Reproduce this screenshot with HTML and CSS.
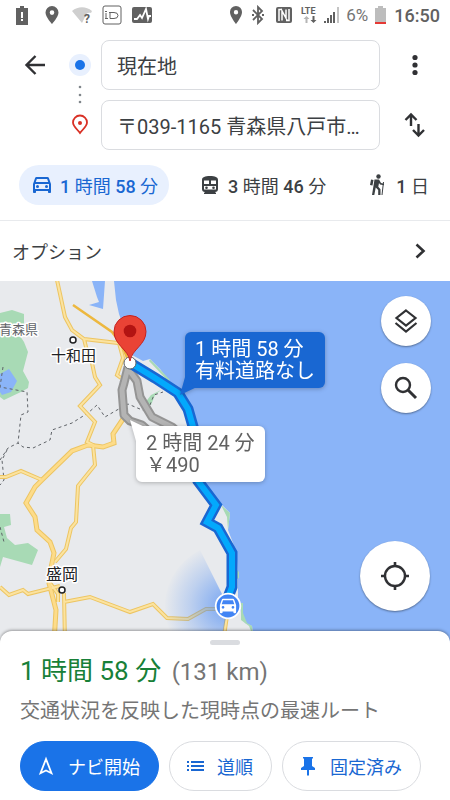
FILE: index.html
```html
<!DOCTYPE html>
<html lang="ja">
<head>
    <meta charset="UTF-8">
    <meta name="viewport" content="width=device-width, initial-scale=1.0">
    <title>ルート検索</title>
    <link rel="stylesheet" href="styles.css">
</head>
<body>

    <!-- Status bar -->
    <div class="status-bar">
        <div class="status-group">
            <svg width="20" height="20" viewBox="0 0 20 20"><path fill="#616161" d="M4 3h4V1h4v2h4v17H4z"/><path fill="#fff" d="M9 7h2v6H9zM9 14h2v2H9z"/></svg>
            <svg width="20" height="20" viewBox="0 0 20 20"><path fill="#616161" fill-rule="evenodd" d="M10 1a6.500 6.500 0 0 0-6.500 6.500C3.500 12 10 19 10 19s6.500-7 6.500-11.500A6.500 6.500 0 0 0 10 1zm0 4.300a2.300 2.300 0 1 1 0 4.600 2.300 2.300 0 0 1 0-4.600z"/></svg>
            <svg width="20" height="20" viewBox="0 0 20 20"><path fill="#cfcfcf" d="M0 6c6-5 14-5 20 0l-1 2c-3-1-6 1-6 4l-3 6z"/><text class="wifi-mark" x="12" y="18">?</text></svg>
            <svg width="20" height="20" viewBox="0 0 20 20"><rect x="1" y="1" width="18" height="18" rx="2" fill="#fff" stroke="#616161"/><path fill="none" stroke="#616161" d="M4 8v6M3 13.500h3M8 7.500v6M7 7.500h5q4 0 4 3t-4 3H8"/><path fill="#616161" d="M3 6h2v1H3z"/></svg>
            <svg width="20" height="20" viewBox="0 0 20 20"><rect y="2" width="20" height="16" rx="2" fill="#616161"/><path fill="none" stroke="#fff" stroke-width="1.800" d="M2 14h3l3-4 2 3 4-9 2 10 1-3h2"/></svg>
        </div>
        <div class="status-group status-right">
            <svg width="16" height="20" viewBox="0 0 16 20"><path fill="#616161" fill-rule="evenodd" d="M6 1a6 6 0 0 0-6 6.200C0 11.500 6 19 6 19s6-7.500 6-11.800A6 6 0 0 0 6 1zm0 4a2.200 2.200 0 1 1 0 4.400A2.200 2.200 0 0 1 6 5z"/></svg>
            <svg width="16" height="20" viewBox="0 0 16 20"><path fill="none" stroke="#616161" stroke-width="1.800" d="M1 5l9 9-4 4V2l4 4-9 9"/><path fill="#616161" d="M0 9h2v2H0zM10 9h2v2h-2z"/></svg>
            <svg width="20" height="20" viewBox="0 0 20 20"><path fill="#616161" d="M2 4q0-2 2-2h12q2 0 2 2v12q0 2-2 2H4q-2 0-2-2z"/><path fill="none" stroke="#fff" stroke-width="1.500" d="M8 4.500H5V16M8 15.500V6l5 9M12 4.500V14M12 15.500h3V4"/></svg>
            <svg width="18" height="20" viewBox="0 0 18 20"><text class="lte-mark" x="1" y="9">LTE</text><path fill="#b5b5b5" d="M6.500 11l3 3h-2v4h-2v-4h-2z"/><path fill="#616161" d="M13.500 18l3-3h-2v-4h-2v4h-2z"/></svg>
            <svg width="16" height="20" viewBox="0 0 16 20"><path fill="#616161" d="M0 16h2v2H0zM3 13h2v5H3zM6 10h2v8H6zM9 7h2v11H9z"/><path fill="#c4c4c4" d="M13 2h2v16h-2z"/></svg>
            <span class="percent">6%</span>
            <svg width="14" height="20" viewBox="0 0 14 20"><path fill="#bdbdbd" d="M1 3h3V1h5v2h3v14H1z"/><path fill="#e53935" d="M1 17h11v2H1z"/></svg>
            <span class="clock">16:50</span>
        </div>
    </div>

    <!-- Start and destination -->
    <form class="search">
        <button class="icon-button" type="button" aria-label="戻る">
            <svg width="24" height="24" viewBox="0 0 24 24"><path fill="none" stroke="#303134" stroke-width="2.400" d="M22 12H4M12.500 3L3.500 12l9 9"/></svg>
        </button>
        <svg class="waypoints" width="42" height="110" viewBox="0 0 42 110">
            <circle cx="21" cy="25" r="11" fill="#e8f0fe"/>
            <circle cx="21" cy="25" r="5" fill="#1a73e8"/>
            <circle cx="21" cy="47" r="1.300" fill="#80868b"/>
            <circle cx="21" cy="55" r="1.300" fill="#80868b"/>
            <circle cx="21" cy="62" r="1.300" fill="#80868b"/>
            <path fill="none" stroke="#d93025" stroke-width="1.800" d="M21 93c-2-3-7-6.500-7-10.500a7 7 0 0 1 14 0C28 86.500 23 90 21 93z"/>
            <circle cx="21" cy="83" r="2" fill="#d93025"/>
        </svg>
        <input class="place" type="text" aria-label="出発地" value="現在地">
        <button class="icon-button" type="button" aria-label="メニュー">
            <svg width="24" height="24" viewBox="0 0 24 24"><g fill="#303134"><circle cx="12" cy="4.500" r="2.600"/><circle cx="12" cy="12" r="2.600"/><circle cx="12" cy="19.500" r="2.600"/></g></svg>
        </button>
        <input class="place destination" type="text" aria-label="目的地" value="〒039-1165 青森県八戸市…">
        <button class="icon-button" type="button" aria-label="入れ替え">
            <svg width="24" height="26" viewBox="0 0 24 26"><path fill="none" stroke="#303134" stroke-width="2.400" d="M8 14V2.500M2.500 8L8 2.500 13.500 8M15.500 12v11.500M10 18l5.500 5.500L21 18"/></svg>
        </button>
    </form>

    <!-- Travel modes -->
    <nav class="modes">
        <button class="mode active">
            <svg width="20" height="20" viewBox="2 3 20 20"><path fill="currentColor" d="M18.920 6.010C18.720 5.420 18.160 5 17.500 5h-11c-.66 0-1.210.42-1.420 1.010L3 12v8c0 .55.45 1 1 1h1c.55 0 1-.45 1-1v-1h12v1c0 .55.45 1 1 1h1c.55 0 1-.45 1-1v-8l-2.080-5.990zM6.850 7h10.290l1.080 3.110H5.770L6.850 7zM19 17H5v-5h14v5z"/><circle cx="7.500" cy="14.500" r="1.500" fill="currentColor"/><circle cx="16.500" cy="14.500" r="1.500" fill="currentColor"/></svg>
            <span><b>1</b> 時間 <b>58</b> 分</span>
        </button>
        <button class="mode">
            <svg width="20" height="20" viewBox="0 0 20 20"><path fill="currentColor" fill-rule="evenodd" d="M2 5c0-3 3-4 8-4s8 1 8 4v9q0 3-3 3l1 1v1H4v-1l1-1q-3 0-3-3zm2 .500V9h5V5.500zm7 0V9h5V5.500zM4 11v3.500h12V11z"/><circle cx="6.500" cy="12.800" r="1.300" fill="currentColor"/><circle cx="13.500" cy="12.800" r="1.300" fill="currentColor"/></svg>
            <span><b>3</b> 時間 <b>46</b> 分</span>
        </button>
        <button class="mode">
            <svg width="20" height="22" viewBox="0 0 20 22"><circle cx="10.500" cy="2.500" r="2.200" fill="currentColor"/><path fill="currentColor" d="M6.500 5.500h4.500l2 3.500 3 .700V11.300l-4-.800-1-1.500-.700 3.700 2.200 2.500V21h-2.300v-5l-2.500-2.500L6.300 21H4z"/><path fill="currentColor" d="M3 5.500l2.500.500-1 5.500-2.500-.500z"/><path fill="none" stroke="currentColor" d="M15.500 8l-1.500 13"/></svg>
            <span><b>1</b> 日</span>
        </button>
    </nav>

    <button class="options">
        <span>オプション</span>
        <svg width="20" height="20" viewBox="0 0 20 20"><path fill="none" stroke="#303134" stroke-width="2.600" d="M6.500 3.500L13.500 10l-7 6.500"/></svg>
    </button>

    <!-- Map -->
    <main class="map">
        <svg class="map-canvas" viewBox="0 281 450 362" preserveAspectRatio="xMinYMin slice">
            <defs>
                <radialGradient id="beam" gradientUnits="userSpaceOnUse" cx="228" cy="606" r="64">
                    <stop offset="0" stop-color="#4285f4" stop-opacity=".7"/>
                    <stop offset=".6" stop-color="#4285f4" stop-opacity=".25"/>
                    <stop offset="1" stop-color="#4285f4" stop-opacity="0"/>
                </radialGradient>
            </defs>
            <rect y="281" width="450" height="362" fill="#8ab4f8"/>
            <path fill="#e8eaed" d="M0 281H92L97 297 99 302 89 305 103 309 105 281H114L116 300 119 314 124 328 132 355 143 361 150 359 160 369 178 393 188 408 193 427 200 482 218 505 222 505 230 513 228 530 233 543 237 560 238 577 238 603 245 623 252 626 254 643H0z"/>

            <!-- Parks and lake -->
            <g fill="#a8dab5">
                <path d="M0 313L12 310 24 314 24 326 20 336 24 342 28 352 23 371 29 382 28 388 23 391 4 400 0 397z"/>
                <path d="M0 514H10L11 525 4 527 7 538 15 545 28 543 38 550 32 565 3 557 0 567z"/>
                <path d="M144 404L151 395 161 390 155 395 151 405z"/>
                <path d="M150 359L170 380 168 381 149 361z"/>
                <path d="M221 505L230 513 228 530 227 517zM237 570l2 2v6l-2 1zM241 603h2v10l4 10 5 3 1 10-4-10-8-6z"/>
            </g>
            <path fill="#8ab4f8" d="M0 374L9 369 17 381 11 392 2 395 0 392z"/>

            <g class="border-line">
                <path d="M0 460L8 448 18 443 23 447 33 448 50 440 52 430 72 423 88 413 97 405 105 417 117 410 128 404 147 412 154 395 163 392"/>
                <path d="M3 367L0 387 27 392 28 412 21 415 18 443M7 450L2 460 4 480 0 485M0 527L4 542"/>
            </g>

            <!-- Roads: darker casing below, light centre above -->
            <g class="road-case">
                <path d="M57 280L65 317 72 330 84 339 118 343M84 339L86 347 92 363 95 377 100 385 80 406 95 422 87 442 93 445 95 465 78 486 76 522 71 528 66 549 55 562"/>
                <path d="M0 477H6L21 471 42 480M0 587L9 595 23 590 28 594 60 586M64 602L90 597 130 612 153 604 167 618 188 619 206 609H228L223 643M64 593L65 643M50 583L58 594V602M119 343L123 358 117 375 121 378"/>
            </g>
            <g class="road-case wide">
                <path d="M123 419L113 434 114 443 103 447 88 445 72 451 42 480 35 487 26 503 35 517 37 530 50 542 54 553 50 573 49 583 56 610 54 643"/>
            </g>
            <g class="road-fill">
                <path d="M57 280L65 317 72 330 84 339 118 343M84 339L86 347 92 363 95 377 100 385 80 406 95 422 87 442 93 445 95 465 78 486 76 522 71 528 66 549 55 562"/>
                <path d="M0 477H6L21 471 42 480M0 587L9 595 23 590 28 594 60 586M64 602L90 597 130 612 153 604 167 618 188 619 206 609H228L223 643M64 593L65 643M50 583L58 594V602M119 343L123 358 117 375 121 378"/>
            </g>
            <g class="road-fill wide">
                <path d="M123 419L113 434 114 443 103 447 88 445 72 451 42 480 35 487 26 503 35 517 37 530 50 542 54 553 50 573 49 583 56 610 54 643"/>
            </g>
            <path fill="none" stroke="#edb83f" stroke-width="2.500" d="M73 305L112 332 122 345 128 360"/>

            <path fill="url(#beam)" d="M228 606L200 550A64 64 0 0 0 216 670z"/>

            <!-- Alternative routes -->
            <g class="alt-case">
                <path d="M128 367L124 383 122 390 124 415 130 421 142 425 152 434M129 370L137 381 140 397 152 417 172 427 180 434"/>
            </g>
            <g class="alt-fill">
                <path d="M128 367L124 383 122 390 124 415 130 421 142 425 152 434M129 370L137 381 140 397 152 417 172 427 180 434"/>
            </g>

            <!-- Selected route -->
            <path class="route-case" d="M132 364L155 378 178 393 188 409 194 430 198 481 216 505 207 522 218 528 232 553 232 587 227 600"/>
            <path class="route-fill" d="M132 364L155 378 178 393 188 409 194 430 198 481 216 505 207 522 218 528 232 553 232 587 227 600"/>

            <circle cx="130" cy="363" r="6" fill="#fff" stroke="#5f6368"/>
            <path fill="#ea4335" stroke="#c5221f" d="M130 361C128 349 114 345 114 331.500a16 16 0 0 1 32 0C146 345 132 349 130 361z"/>
            <circle cx="130" cy="331" r="6.300" fill="#b31412"/>

            <!-- Current position -->
            <circle cx="228" cy="606" r="12.300" fill="#4285f4" stroke="#fff" stroke-width="1.800"/>
            <svg x="219" y="597" width="18" height="18" viewBox="2 3 20 20"><path fill="#fff" d="M18.920 6.010C18.720 5.420 18.160 5 17.500 5h-11c-.66 0-1.210.42-1.420 1.010L3 12v8c0 .55.45 1 1 1h1c.55 0 1-.45 1-1v-1h12v1c0 .55.45 1 1 1h1c.55 0 1-.45 1-1v-8l-2.080-5.990zM6.500 16c-.83 0-1.500-.67-1.500-1.500S5.670 13 6.500 13s1.500.67 1.500 1.500S7.330 16 6.500 16zm11 0c-.83 0-1.500-.67-1.500-1.500s.67-1.500 1.500-1.500 1.500.67 1.500 1.500-.67 1.500-1.500 1.500zM5 11l1.500-4.500h11L19 11H5z"/></svg>

            <!-- Places -->
            <circle class="town" cx="73" cy="340" r="3"/>
            <circle class="town" cx="62" cy="590" r="3"/>
            <text class="place-name region" x="-1" y="334">青森県</text>
            <text class="place-name" x="51" y="361">十和田</text>
            <text class="place-name city" x="46" y="580">盛岡</text>
        </svg>

        <div class="callout main-route">
            <div>1 時間 58 分</div>
            <div>有料道路なし</div>
        </div>
        <div class="callout other-route">
            <div>2 時間 24 分</div>
            <div>￥490</div>
        </div>

        <div class="map-tools">
            <button class="round-button" aria-label="レイヤ">
                <svg width="26" height="26" viewBox="0 0 26 26"><path fill="none" stroke="#303134" stroke-width="2.200" d="M13 2.500L22.500 10 13 17.500 3.500 10zM2.500 15L13 23.500 23.500 15"/></svg>
            </button>
            <button class="round-button" aria-label="検索">
                <svg width="26" height="26" viewBox="0 0 26 26"><circle cx="10" cy="10" r="7" fill="none" stroke="#303134" stroke-width="2.400"/><path stroke="#303134" stroke-width="3" d="M15 15l8 8"/></svg>
            </button>
        </div>
        <button class="round-button locate" aria-label="現在地を表示">
            <svg width="30" height="30" viewBox="0 0 30 30"><circle cx="15" cy="15" r="10" fill="none" stroke="#303134" stroke-width="2.400"/><path stroke="#303134" stroke-width="2.600" d="M15 1v4.500M15 24.500V29M1 15h4.500M24.500 15H29"/></svg>
        </button>
    </main>

    <!-- Route summary -->
    <section class="sheet">
        <div class="handle"></div>
        <h1 class="duration">1 時間 58 分 <span class="distance">(131 km)</span></h1>
        <p class="note">交通状況を反映した現時点の最速ルート</p>
        <div class="actions">
            <button class="action primary">
                <svg width="20" height="20" viewBox="0 0 20 20"><path fill="none" stroke="currentColor" stroke-width="1.800" d="M10 3L4.500 17.200 10 14.500l5.500 2.700z"/></svg>
                ナビ開始
            </button>
            <button class="action">
                <svg width="20" height="20" viewBox="0 0 20 20"><path fill="currentColor" d="M2 5h2v2H2zM2 9h2v2H2zM2 13h2v2H2zM6 5h13v2H6zM6 9h13v2H6zM6 13h13v2H6z"/></svg>
                道順
            </button>
            <button class="action">
                <svg width="20" height="20" viewBox="0 0 20 20"><path fill="#1a73e8" d="M5 1h10v1l-1 1v7l3 2v2h-6v5l-1 1-1-1v-5H3v-2l3-2V3L5 2z"/></svg>
                固定済み
            </button>
        </div>
    </section>

</body>
</html>
```

FILE: styles.css
```css
* {
    box-sizing: border-box;
}

body {
    display: flex;
    flex-direction: column;
    min-height: 100vh;
    margin: 0;
    background-color: #fff;
    color: #3c4043;
    font-family: Roboto, "Noto Sans CJK JP", sans-serif;
}

button {
    padding: 0;
    border: none;
    background: none;
    color: inherit;
    font-family: inherit;
    cursor: pointer;
}

svg {
    flex: none;
}

/* Status bar */
.status-bar {
    display: flex;
    justify-content: space-between;
    align-items: center;
    height: 30px;
    padding: 0 10px 0 12px;
    color: #616161;
}

.status-group {
    display: flex;
    align-items: center;
    gap: 10px;
}

.status-right {
    gap: 6px;
}

.percent {
    font-size: 17px;
    color: #757575;
}

.clock {
    font-size: 18px;
    font-weight: 500;
}

.wifi-mark {
    font-size: 12px;
    font-weight: 700;
    fill: #616161;
}

.lte-mark {
    font-size: 9px;
    font-weight: 700;
    fill: #616161;
}

/* Start and destination */
.search {
    display: grid;
    grid-template-columns: 48px 42px 1fr 70px;
    grid-template-rows: 50px 50px;
    row-gap: 10px;
    padding: 10px 0 0 11px;
}

.icon-button {
    display: flex;
    justify-content: center;
    align-items: center;
}

.waypoints {
    grid-column: 2;
    grid-row: 1 / 3;
}

.place {
    min-width: 0;
    padding: 0 15px;
    border: 1px solid #dadce0;
    border-radius: 8px;
    background-color: #fff;
    color: #3c4043;
    font-family: inherit;
    font-size: 20px;
    text-overflow: ellipsis;
}

.destination {
    grid-column: 3;
}

/* Travel modes */
.modes {
    display: flex;
    gap: 18px;
    padding: 15px 0 15px 19px;
    border-bottom: 1px solid #e8eaed;
    overflow: hidden;
}

.mode {
    display: flex;
    align-items: center;
    gap: 8px;
    height: 40px;
    padding: 0 11px 0 13px;
    border-radius: 20px;
    font-size: 18px;
    white-space: nowrap;
}

.mode b {
    font-weight: 500;
}

.mode.active {
    background-color: #e8f0fe;
    color: #1967d2;
}

.options {
    display: flex;
    justify-content: space-between;
    align-items: center;
    height: 60px;
    padding: 0 20px 0 12px;
    font-size: 18px;
}

/* Map */
.map {
    position: relative;
    z-index: 0;
    flex: 1;
    min-height: 362px;
    overflow: hidden;
    box-shadow: inset 0 2px 2px rgba(0,0,0,0.25);
}

.map-canvas {
    position: absolute;
    top: 0;
    left: 0;
    z-index: -1;
    width: 100%;
    height: 100%;
}

.border-line {
    fill: none;
    stroke: #5f6368;
    stroke-dasharray: 3 3;
}

.road-case {
    fill: none;
    stroke: #edc562;
    stroke-width: 4;
}

.road-case.wide {
    stroke-width: 5;
}

.road-fill {
    fill: none;
    stroke: #fbe3a0;
    stroke-width: 2;
}

.road-fill.wide {
    stroke: #fddc8a;
    stroke-width: 3;
}

.alt-case {
    fill: none;
    stroke: #949494;
    stroke-width: 9;
    stroke-linejoin: round;
}

.alt-fill {
    fill: none;
    stroke: #b4b4b4;
    stroke-width: 5;
    stroke-linejoin: round;
}

.route-case {
    fill: none;
    stroke: #1967d2;
    stroke-width: 11;
}

.route-fill {
    fill: none;
    stroke: #03a9fc;
    stroke-width: 6;
}

.town {
    fill: #fff;
    stroke: #202124;
    stroke-width: 1.5;
}

.place-name {
    font-size: 15px;
    fill: #202124;
    stroke: #fff;
    stroke-width: 3;
    stroke-linejoin: round;
    paint-order: stroke;
}

.place-name.region {
    font-size: 13px;
    fill: #5f6368;
}

.place-name.city {
    font-size: 16px;
}

.callout {
    position: absolute;
    padding: 6px 10px;
    border-radius: 6px;
    font-size: 20px;
    line-height: 22px;
    white-space: nowrap;
    filter: drop-shadow(0 1px 2px rgba(0,0,0,0.25));
}

.callout::before {
    content: "";
    position: absolute;
    width: 18px;
    height: 24px;
    background-color: inherit;
}

.main-route {
    top: 51px;
    left: 185px;
    background-color: #1967d2;
    color: #fff;
}

.main-route::before {
    bottom: -7px;
    left: -5px;
    clip-path: polygon(30% 20%, 0 100%, 85% 70%);
}

.other-route {
    top: 145px;
    left: 136px;
    background-color: #fff;
    color: #616161;
}

.other-route::before {
    top: -6px;
    left: -6px;
    clip-path: polygon(0 0, 85% 30%, 34% 90%);
}

.map-tools {
    position: absolute;
    top: 15px;
    right: 19px;
    display: flex;
    flex-direction: column;
    gap: 17px;
}

.round-button {
    display: flex;
    justify-content: center;
    align-items: center;
    width: 50px;
    height: 50px;
    border-radius: 50%;
    background-color: #fff;
    box-shadow: 0 1px 2px rgba(0,0,0,0.4);
}

.locate {
    position: absolute;
    right: 20px;
    bottom: 32px;
    width: 70px;
    height: 70px;
}

/* Route summary */
.sheet {
    z-index: 1;
    margin-top: -12px;
    padding: 9px 20px 10px;
    border-radius: 12px 12px 0 0;
    background-color: #fff;
    box-shadow: 0 -1px 3px rgba(0,0,0,0.35);
}

.handle {
    width: 30px;
    height: 5px;
    margin: 0 auto;
    border-radius: 3px;
    background-color: #dadce0;
}

.duration {
    margin: 8px 0 6px;
    color: #188038;
    font-size: 26px;
    font-weight: 400;
    line-height: 36px;
}

.distance {
    margin-left: 4px;
    color: #757575;
    font-size: 24px;
}

.note {
    margin: 0;
    color: #757575;
    font-size: 20px;
    line-height: 30px;
}

.actions {
    display: flex;
    gap: 10px;
    margin-top: 15px;
}

.action {
    display: flex;
    align-items: center;
    gap: 12px;
    height: 50px;
    padding: 0 18px 0 15px;
    border: 1px solid #dadce0;
    border-radius: 25px;
    color: #1967d2;
    font-size: 18px;
    white-space: nowrap;
}

.action.primary {
    border-color: #1a73e8;
    background-color: #1a73e8;
    color: #fff;
}
```
